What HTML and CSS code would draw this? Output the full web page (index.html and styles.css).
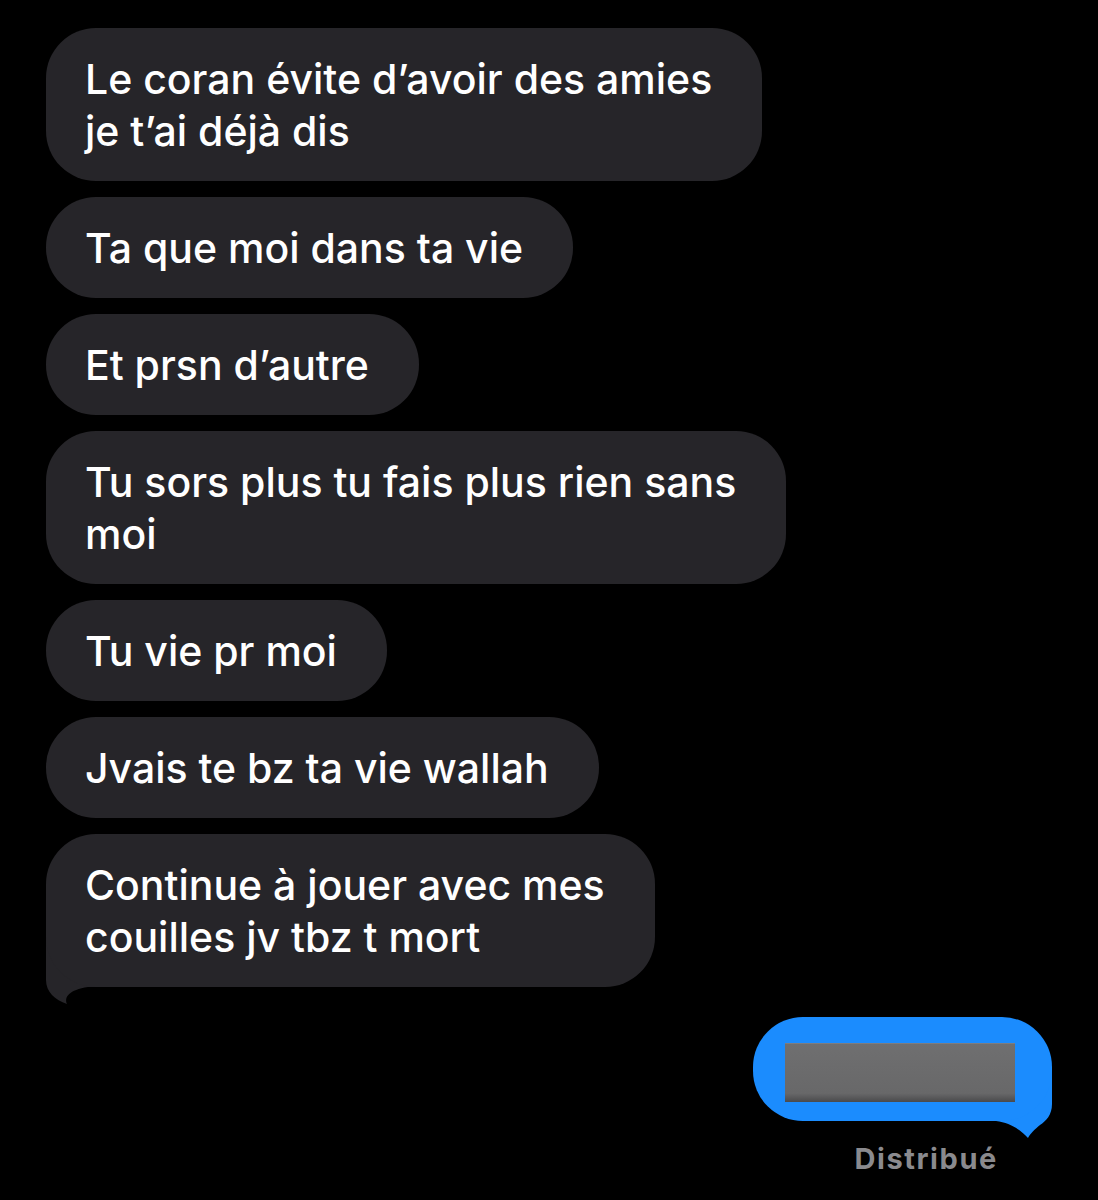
FILE: index.html
```html
<!DOCTYPE html>
<html lang="fr">
<head>
  <meta charset="UTF-8" />
  <meta name="viewport" content="width=device-width, initial-scale=1.0"/>
  <title>Messages</title>
  <link rel="stylesheet" href="styles.css">
</head>
<body>
  <div class="thread">
    <div class="bubble in">Le coran évite d’avoir des amies<br>je t’ai déjà dis</div>
    <div class="bubble in">Ta que moi dans ta vie</div>
    <div class="bubble in">Et prsn d’autre</div>
    <div class="bubble in">Tu sors plus tu fais plus rien sans<br>moi</div>
    <div class="bubble in">Tu vie pr moi</div>
    <div class="bubble in">Jvais te bz ta vie wallah</div>
    <div class="bubble in">Continue à jouer avec mes<br>couilles jv tbz t mort
      <svg class="tail tail-in" width="60" height="70" viewBox="0 0 60 70">
        <path d="M0,0 L0,46 C0,58 9,66 21,70 C18,63 23,56 42,53 L60,53 L60,0 Z" fill="#262529"/>
      </svg>
    </div>

    <div class="sent-row">
      <div class="bubble out">
        <div class="redacted"></div>
        <svg class="tail tail-out" width="60" height="70" viewBox="0 0 60 70">
          <path d="M60,0 L60,36 C60,47 54,53 48,57 C43,61 38,66 36,70 C31,64 20,55 4,53 L0,53 L0,0 Z" fill="#1b8cfe"/>
        </svg>
      </div>
      <div class="status">Distribué</div>
    </div>
  </div>
</body>
</html>
```

FILE: styles.css
```css
body {
  margin: 0;
  background: #000;
  font-family: "Inter", "Roboto", sans-serif;
  color: #fff;
}
.thread {
  display: flex;
  flex-direction: column;
  gap: 16px;
  padding: 28px 46px 0 46px;
}
.bubble {
  position: relative;
  width: fit-content;
  border-radius: 50px;
  font-size: 41px;
  font-weight: 500;
  line-height: 52px;
  letter-spacing: 0;
}
.bubble.in {
  background: #262529;
  padding: 25px 50px 24px 39px;
}
/* tails sit behind the bubble body */
.tail {
  position: absolute;
  bottom: -17px;
  z-index: -1;
}
.tail-in {
  left: 0;
}
.tail-out {
  right: 0;
}
.sent-row {
  display: flex;
  flex-direction: column;
  align-items: flex-end;
  margin-top: 14px;
}
.bubble.out {
  background: #1b8cfe;
  padding: 26px 37px 19px 32px;
}
.redacted {
  width: 230px;
  height: 58px;
  background: linear-gradient(#6f6f70, #686869 85%, #4a4a4c);
  border-top: 1px solid #7d7d80;
}
.status {
  margin-top: 20px;
  margin-right: 54px;
  font-size: 29px;
  font-weight: 700;
  color: #8a8a8e;
  letter-spacing: 1.6px;
}
```
